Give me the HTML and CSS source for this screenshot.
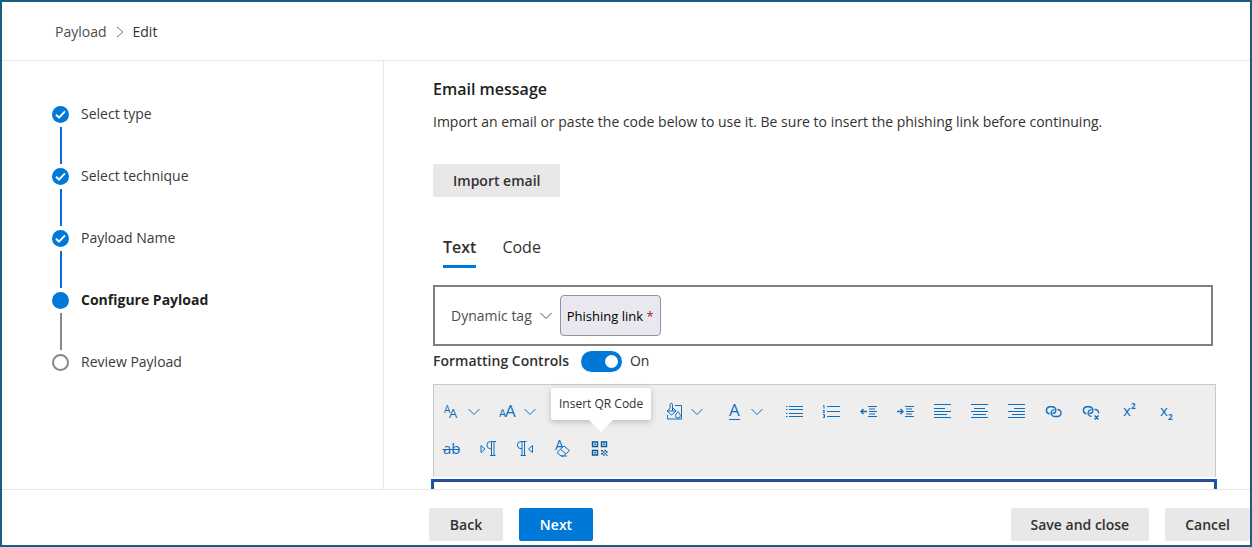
FILE: index.html
```html
<!DOCTYPE html>
<html lang="en">
<head>
<meta charset="utf-8">
<title>Payload - Edit</title>
<link rel="stylesheet" href="styles.css">
</head>
<body>
<div class="frame">
  <header class="topbar">
    <nav class="crumbs" aria-label="Breadcrumb">
      <a class="crumb" href="#">Payload</a>
      <svg class="crumb-sep" width="8" height="12" viewBox="0 0 8 12" aria-hidden="true"><path d="M1 1l6 5-6 5"/></svg>
      <a class="crumb crumb-current" href="#" aria-current="page">Edit</a>
    </nav>
  </header>

  <div class="body">
    <aside class="sidebar">
      <ol class="steps">
        <li class="step step-done"><span class="dot"><svg width="17" height="17" viewBox="0 0 17 17" aria-hidden="true"><path d="M4 8.800l3 2.800 6-6.200"/></svg></span><span>Select type</span></li>
        <li class="step step-done"><span class="dot"><svg width="17" height="17" viewBox="0 0 17 17" aria-hidden="true"><path d="M4 8.800l3 2.800 6-6.200"/></svg></span><span>Select technique</span></li>
        <li class="step step-done"><span class="dot"><svg width="17" height="17" viewBox="0 0 17 17" aria-hidden="true"><path d="M4 8.800l3 2.800 6-6.200"/></svg></span><span>Payload Name</span></li>
        <li class="step step-current" aria-current="step"><span class="dot"></span><span>Configure Payload</span></li>
        <li class="step step-todo"><span class="dot"></span><span>Review Payload</span></li>
      </ol>
    </aside>

    <main class="main">
      <h1 class="title">Email message</h1>
      <p class="intro">Import an email or paste the code below to use it. Be sure to insert the phishing link before continuing.</p>
      <button class="btn import" type="button">Import email</button>

      <div class="tabs" role="tablist">
        <button class="tab tab-active" role="tab" aria-selected="true" type="button">Text</button>
        <button class="tab" role="tab" aria-selected="false" type="button">Code</button>
      </div>

      <div class="tagbar">
        <button class="tag-menu" type="button">Dynamic tag <svg class="chevron" width="12" height="8" viewBox="0 0 12 8" aria-hidden="true"><path d="M.5 1L6 6.500 11.500 1"/></svg></button>
        <button class="tag-link" type="button">Phishing link <span class="required">*</span></button>
      </div>

      <div class="format">
        <label class="format-label" for="format">Formatting Controls</label>
        <input class="toggle" id="format" type="checkbox" role="switch" checked>
        <span>On</span>
      </div>

      <div class="editor">
        <div class="toolbar" role="toolbar" aria-label="Formatting">
          <button class="tool tool-menu" type="button" aria-label="Font">
            <svg class="icon" viewBox="0 0 17 17"><text x="1" y="10" font-size="10">A</text><text x="6" y="15" font-size="13">A</text></svg>
            <svg class="chevron" width="12" height="8" viewBox="0 0 12 8"><path d="M.5 1L6 6.500 11.500 1"/></svg>
          </button>
          <button class="tool tool-menu" type="button" aria-label="Font size">
            <svg class="icon" viewBox="0 0 17 17"><text x="0" y="14" font-size="11">A</text><text x="6" y="14" font-size="17">A</text></svg>
            <svg class="chevron" width="12" height="8" viewBox="0 0 12 8"><path d="M.5 1L6 6.500 11.500 1"/></svg>
          </button>
          <button class="tool" type="button" aria-label="Bold"><svg class="icon" viewBox="0 0 17 17"><path d="M5 3h4a2.500 2.500 0 010 5H5zM5 8h5a3 3 0 010 6H5z"/></svg></button>
          <button class="tool" type="button" aria-label="Italic"><svg class="icon" viewBox="0 0 17 17"><path d="M7 3h5M5 14h5M9.500 3l-2 11"/></svg></button>
          <button class="tool" type="button" aria-label="Underline"><svg class="icon" viewBox="0 0 17 17"><path d="M5 2v6a3.500 3.500 0 007 0V2M4 15h9"/></svg></button>
          <button class="tool tool-color" type="button" aria-label="Highlight color">
            <svg class="icon" viewBox="0 0 17 17"><path d="M9 2.500h6.500v13.500h-14v-4M6.500 8V1.500a1.200 1.200 0 00-2.400 0v4M4 5.500L1 8l4.500 4 4.500-4-3.500-3.500M1 8h8.500M12 8.500c-1.500 2-2.500 3-2.500 4.200a2.400 2.400 0 004.800 0c0-1.200-1-2.200-2.300-4.200z"/></svg>
            <svg class="chevron" width="12" height="8" viewBox="0 0 12 8"><path d="M.5 1L6 6.500 11.500 1"/></svg>
          </button>
          <button class="tool tool-color" type="button" aria-label="Font color">
            <svg class="icon" viewBox="0 0 17 17"><text x="3" y="13" font-size="17">A</text><path d="M3 16.500h11"/></svg>
            <svg class="chevron" width="12" height="8" viewBox="0 0 12 8"><path d="M.5 1L6 6.500 11.500 1"/></svg>
          </button>
          <button class="tool" type="button" aria-label="Bulleted list"><svg class="icon" viewBox="0 0 17 17"><path d="M3 3.500h14M3 6.500h14M3 10.500h14M3 13.500h14M0 3.500h1.500M0 6.500h1.500M0 10.500h1.500M0 13.500h1.500"/></svg></button>
          <button class="tool" type="button" aria-label="Numbered list"><svg class="icon" viewBox="0 0 17 17"><path d="M4 3.500h13M4 8.500h13M4 13.500h13M0 3l1-.5v3M0 7.500h1.500L.3 9.500h1.500M0 11.500h1.500v3H0M.5 13h1"/></svg></button>
          <button class="tool" type="button" aria-label="Decrease indent"><svg class="icon" viewBox="0 0 17 17"><path d="M8 3.500h9M9 6h6M9 8.500h8M9 11h6M8 13.500h9"/><path class="arrow" d="M7 8.500H1M3.500 6L1 8.500 3.500 11"/></svg></button>
          <button class="tool" type="button" aria-label="Increase indent"><svg class="icon" viewBox="0 0 17 17"><path d="M8 3.500h9M9 6h6M9 8.500h8M9 11h6M8 13.500h9"/><path class="arrow" d="M0 8.500h6M3.500 6L6 8.500 3.500 11"/></svg></button>
          <button class="tool" type="button" aria-label="Align left"><svg class="icon" viewBox="0 0 17 17"><path d="M0 1.500h17M0 5.500h11M0 8.500h17M0 11.500h13M0 14.500h17"/></svg></button>
          <button class="tool" type="button" aria-label="Align center"><svg class="icon" viewBox="0 0 17 17"><path d="M0 1.500h17M3 5.500h11M0 8.500h17M2 11.500h13M0 14.500h17"/></svg></button>
          <button class="tool" type="button" aria-label="Align right"><svg class="icon" viewBox="0 0 17 17"><path d="M0 1.500h17M6 5.500h11M0 8.500h17M4 11.500h13M0 14.500h17"/></svg></button>
          <button class="tool" type="button" aria-label="Insert link"><svg class="icon" viewBox="0 0 17 17"><path class="arrow" d="M4.500 11A3.700 3.700 0 014.500 3.700h3a3.600 3.600 0 013 5.300c-.8 1.200-2 1.500-3 1M12.500 6.500a3.500 3.500 0 010 7h-3a3.500 3.500 0 01-3-5.200c.7-1.200 1.800-1.700 3-1.300"/></svg></button>
          <button class="tool" type="button" aria-label="Remove link"><svg class="icon" viewBox="0 0 17 17"><path class="arrow" d="M4.500 11A3.700 3.700 0 014.500 3.700h3a3.600 3.600 0 013 5.300c-.8 1.200-2 1.500-3 1M12.500 6.500a3.400 3.400 0 014 4M9.500 13.500a3.500 3.500 0 01-3-5.200c.7-1.200 1.800-1.700 3-1.300M12.500 12.500l4 4M16.500 12.500l-4 4"/></svg></button>
          <button class="tool" type="button" aria-label="Superscript"><svg class="icon" viewBox="0 0 17 17"><text x="4" y="13" font-size="15">x</text><text class="strong" x="12" y="6" font-size="8">2</text></svg></button>
          <button class="tool" type="button" aria-label="Subscript"><svg class="icon" viewBox="0 0 17 17"><text x="4" y="13" font-size="15">x</text><text class="strong" x="12" y="17" font-size="8">2</text></svg></button>
          <button class="tool" type="button" aria-label="Strikethrough"><svg class="icon" viewBox="0 0 17 17"><text x="0" y="14" font-size="15">ab</text><path d="M-.5 9.500h17"/></svg></button>
          <button class="tool" type="button" aria-label="Left to right"><svg class="icon" viewBox="0 0 17 17"><path d="M1 5.500v7L5 9zM16 1.500h-5.500a3.600 3.600 0 000 7.200h1M11.500 1.500v14M14 1.500v14M10 15.500h5.500"/></svg></button>
          <button class="tool" type="button" aria-label="Right to left"><svg class="icon" viewBox="0 0 17 17"><path d="M15.500 5.500v7L11.500 9zM9.500 1.500H4a3.600 3.600 0 000 7.200h1M5 1.500v14M7.500 1.500v14M3.500 15.500H9"/></svg></button>
          <button class="tool" type="button" aria-label="Clear formatting"><svg class="icon" viewBox="0 0 17 17"><text x="1" y="10" font-size="14">A</text><path class="eraser" d="M10 6l5.500 4.500-6 5.500H7l-4-3.500zM6.300 9.300l5.500 4.500M7 16h6"/></svg></button>
          <button class="tool tool-qr" type="button" aria-describedby="qr-tip" aria-label="Insert QR Code">
            <svg class="icon icon-thick" viewBox="0 0 17 17"><path d="M1.500 2h5v4.500h-5zM10.500 2h5v4.500h-5zM1.500 10.500h5V15h-5z"/><path class="solid" d="M3.200 3.500h1.600v1.500H3.200zM12.200 3.500h1.600v1.500h-1.600zM3.200 12h1.600v1.500H3.200zM10 10h2v1.500h-2zM13.500 9.800h1.500v1.500h-1.500zM12 11.500h1.500V13H12zM15 11h1.500v1.700H15zM10 13h2v1.500h-2zM13.500 13H15v1.500h-1.500zM12 14.500h1.500v1.300H12zM15 14.500h1.500v1.300H15z"/></svg>
            <span class="tooltip" id="qr-tip" role="tooltip">Insert QR Code</span>
          </button>
        </div>
        <textarea class="message" aria-label="Message"></textarea>
      </div>
    </main>
  </div>

  <footer class="footer">
    <button class="btn" type="button">Back</button>
    <button class="btn btn-primary" type="button">Next</button>
    <button class="btn btn-save" type="button">Save and close</button>
    <button class="btn btn-cancel" type="button">Cancel</button>
  </footer>
</div>
</body>
</html>
```

FILE: styles.css
```css
* {
  box-sizing: border-box;
}

body {
  margin: 0;
  font-family: "Open Sans", "Noto Sans", sans-serif;
  font-size: 14px;
  line-height: 20px;
  color: #323130;
  background: #fff;
}

button {
  font: inherit;
  color: inherit;
  border: 0;
  padding: 0;
  background: none;
}

svg {
  flex: none;
  fill: none;
  stroke: currentColor;
}

.frame {
  display: flex;
  flex-direction: column;
  height: 100vh;
  border: 2px solid #156082;
  overflow: hidden;
}

.topbar {
  flex: none;
  padding: 20px 53px 18px;
  border-bottom: 1px solid #e6e6e6;
}

.crumbs {
  display: flex;
  align-items: center;
  gap: 9px;
}

.crumb {
  color: #504e4c;
  text-decoration: none;
}

.crumb-current {
  color: #323130;
}

.crumb-sep {
  color: #767472;
}

.body {
  flex: 1;
  display: flex;
  min-height: 0;
}

.sidebar {
  flex: none;
  width: 382px;
  padding: 43px 50px;
  border-right: 1px solid #e6e6e6;
}

.steps {
  display: flex;
  flex-direction: column;
  margin: 0;
  padding: 0;
  list-style: none;
}

.step {
  display: grid;
  grid-template-columns: 17px 1fr;
  column-gap: 12px;
  align-items: center;
  color: #3b3a39;
}

.step:not(:last-child)::after {
  content: "";
  width: 2px;
  height: 37px;
  margin: 3px 0 2px 8px;
  background: #0f6cd6;
}

.dot {
  width: 17px;
  height: 17px;
  border-radius: 50%;
  background: #0078d7;
  color: #fff;
}

.dot svg {
  display: block;
  stroke-width: 2;
}

.step-current {
  font-weight: 700;
  color: #201f1e;
}

.step.step-current::after {
  background: #8a8886;
}

.step-todo .dot {
  border: 2px solid #8a8886;
  background: #fff;
}

.main {
  flex: 1;
  min-width: 0;
  padding: 17px 37px 0 49px;
  overflow: hidden;
}

.title {
  margin: 0 0 12px;
  font-size: 16px;
  line-height: 22px;
  font-weight: 600;
  color: #201f1e;
}

.intro {
  margin: 0 0 32px;
}

.btn {
  flex: none;
  min-width: 74px;
  height: 33px;
  padding: 0 20px;
  border-radius: 2px;
  background: #e8e8e8;
  font-weight: 600;
}

.tabs {
  display: flex;
  gap: 26px;
  margin: 35px 10px 17px;
}

.tab {
  height: 36px;
  padding-bottom: 3px;
  font-size: 16px;
  border-bottom: 3px solid transparent;
}

.tab-active {
  font-weight: 600;
  border-bottom-color: #0078d7;
}

.tagbar {
  display: flex;
  align-items: center;
  gap: 8px;
  height: 61px;
  padding: 0 16px;
  border: 2px solid #7f7f7f;
}

.tag-menu {
  display: flex;
  align-items: center;
  gap: 8px;
  color: #504e4c;
}

.tag-link {
  height: 41px;
  padding: 0 6px;
  border: 1px solid #9292a0;
  border-radius: 4px;
  background: #e8e8ee;
  font-size: 13px;
  color: #000;
}

.required {
  color: #b01020;
}

.format {
  display: flex;
  align-items: center;
  height: 30px;
  margin-bottom: 8px;
  gap: 8px;
}

.format-label {
  margin-right: 4px;
  font-weight: 600;
}

.toggle {
  appearance: none;
  display: flex;
  align-items: center;
  justify-content: flex-end;
  width: 41px;
  height: 21px;
  margin: 0;
  padding: 0 4px;
  border-radius: 11px;
  background: #0078d7;
}

.toggle::before {
  content: "";
  width: 13px;
  height: 13px;
  border-radius: 50%;
  background: #fff;
}

.toggle:not(:checked) {
  justify-content: flex-start;
  background: #8a8886;
}

.editor {
  margin-right: -3px;
}

.toolbar {
  display: flex;
  flex-wrap: wrap;
  padding: 8px 0 10px;
  border: 1px solid #c8c8c8;
  border-bottom: 0;
  background: #eee;
}

.tool {
  display: flex;
  align-items: center;
  gap: 8px;
  width: 37px;
  height: 37px;
  padding-left: 9px;
  color: #106ebe;
}

.tool-menu {
  width: 56px;
}

.tool-color {
  width: 60px;
}

.icon {
  width: 17px;
  height: 17px;
  overflow: visible;
}

.icon text {
  fill: currentColor;
  stroke: none;
  font-weight: 400;
}

.icon .strong {
  font-weight: 700;
}

.icon .arrow {
  stroke-width: 1.4;
}

.icon .eraser {
  fill: #eee;
}

.icon .solid {
  fill: currentColor;
  stroke: none;
}

.icon-thick {
  stroke-width: 1.4;
}

.tool-qr {
  position: relative;
  color: #005a9e;
}

.tooltip {
  position: absolute;
  bottom: 47px;
  left: -31px;
  padding: 6px 8px;
  border-radius: 2px;
  background: #fff;
  box-shadow: 0 2px 6px rgba(0, 0, 0, 0.22);
  font-size: 12px;
  color: #323130;
  white-space: nowrap;
}

.tooltip::after {
  content: "";
  position: absolute;
  top: 100%;
  left: 50%;
  margin-left: -12px;
  border: 12px solid transparent;
  border-top-color: #fff;
  border-bottom: 0;
}

.message {
  display: block;
  width: calc(100% - 1px);
  height: 200px;
  margin: 4px 0 0;
  border: 1px solid #444;
  outline: 2px solid #0f52d6;
  resize: none;
}

.footer {
  flex: none;
  display: flex;
  align-items: center;
  gap: 16px;
  padding: 18px 0 4px 427px;
  border-top: 1px solid #e6e6e6;
}

.btn-primary {
  background: #0078d7;
  color: #fff;
}

.btn-save {
  margin-left: auto;
}
```
